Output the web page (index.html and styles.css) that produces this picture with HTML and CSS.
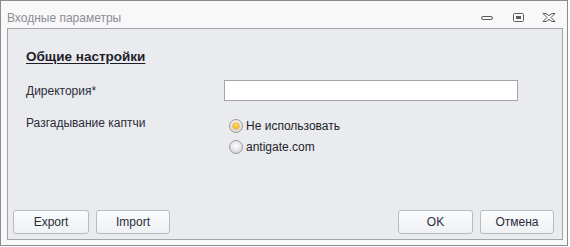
FILE: index.html
```html
<!DOCTYPE html>
<html lang="ru">
<head>
<meta charset="utf-8">
<title>Входные параметры</title>
<link rel="stylesheet" href="styles.css">
</head>
<body>
<div class="window">
  <div class="titlebar">
    <span class="title">Входные параметры</span>
    <div class="controls">
      <svg class="ctl" width="14" height="12" viewBox="0 0 14 12"><rect x="1.5" y="4.5" width="11" height="3" rx="1.5" fill="none" stroke="#5c5c5c"/></svg>
      <svg class="ctl" width="14" height="12" viewBox="0 0 14 12"><rect x="2.5" y="1.5" width="10" height="8" rx="1" fill="none" stroke="#5c5c5c"/><rect x="5" y="4" width="5" height="3" fill="#5c5c5c"/></svg>
      <svg class="ctl" width="14" height="12" viewBox="0 0 14 12"><polygon points="1,1.5 4,1.5 7,3.6 10,1.5 13,1.5 9,5.5 13,9.5 10,9.5 7,7.4 4,9.5 1,9.5 5,5.5" fill="none" stroke="#5c5c5c" stroke-linejoin="round"/></svg>
    </div>
  </div>
  <div class="panel">
    <div class="content">
      <h2 class="heading">Общие настройки</h2>
      <div class="form">
        <label class="label label-mid">Директория*</label>
        <input class="text-input" type="text">
        <label class="label label-top">Разгадывание каптчи</label>
        <div class="radios">
          <div class="radio-row"><span class="radio checked"></span><span class="radio-text">Не использовать</span></div>
          <div class="radio-row"><span class="radio"></span><span class="radio-text">antigate.com</span></div>
        </div>
      </div>
    </div>
    <div class="footer">
      <div class="group">
        <button class="btn btn-export">Export</button>
        <button class="btn btn-import">Import</button>
      </div>
      <div class="group">
        <button class="btn btn-ok">OK</button>
        <button class="btn btn-cancel">Отмена</button>
      </div>
    </div>
  </div>
</div>
</body>
</html>
```
FILE: styles.css
```css
html, body {
  margin: 0;
  padding: 0;
  background: #ffffff;
}
body {
  font-family: "Liberation Sans", Arial, sans-serif;
  font-size: 12px;
  color: #2c2c3a;
}
.window {
  width: 566px;
  height: 244px;
  border: 1px solid #8c8c8c;
  background: #f8f8f8;
  display: flex;
  flex-direction: column;
}
.titlebar {
  height: 27px;
  display: flex;
  align-items: center;
  justify-content: space-between;
  padding-left: 6px;
  padding-right: 11px;
  flex: none;
}
.title {
  color: #8c8c96;
  font-size: 12px;
  margin-top: 6px;
}
.controls {
  display: flex;
  gap: 17px;
  margin-top: 6px;
}
.ctl {
  display: block;
}
.panel {
  margin: 0 4px 5px 6px;
  flex: 1;
  border: 1px solid #a3a5ab;
  background: #e9ebef;
  display: flex;
  flex-direction: column;
}
.content {
  flex: 1;
  padding: 20px 0 0 18px;
}
.heading {
  margin: 0;
  font-size: 13.5px;
  line-height: 16px;
  font-weight: bold;
  color: #1e1e28;
  text-decoration: underline;
  text-underline-offset: 2px;
}
.form {
  margin-top: 15px;
  display: grid;
  grid-template-columns: 198px 294px;
  row-gap: 14px;
}
.label {
  color: #2c2c3a;
}
.label-mid {
  align-self: center;
}
.label-top {
  line-height: 16px;
}
.text-input {
  box-sizing: border-box;
  width: 294px;
  height: 21px;
  border: 1px solid #a3a5ab;
  background: #ffffff;
  margin: 0;
  padding: 0 3px;
  font: inherit;
}
.radios {
  display: flex;
  flex-direction: column;
  padding-left: 5px;
}
.radio-row {
  height: 21px;
  display: flex;
  align-items: center;
  gap: 3px;
}
.radio {
  box-sizing: border-box;
  width: 14px;
  height: 14px;
  border-radius: 50%;
  border: 1px solid #9a9aa2;
  background: radial-gradient(circle at 50% 40%, #fdfdfd 0%, #e6e6e8 50%, #c6c7cb 100%);
  position: relative;
  flex: none;
}
.radio.checked {
  border-color: #a59d8a;
}
.radio.checked::after {
  content: "";
  position: absolute;
  left: 3px;
  top: 3px;
  width: 6px;
  height: 6px;
  border-radius: 50%;
  background: radial-gradient(circle at 50% 35%, #ffe26a 0%, #f7b21c 70%, #e89a0c 100%);
  box-shadow: 0 0 0 0.5px #d9941a;
}
.radio-text {
  color: #1e1e28;
}
.footer {
  display: flex;
  justify-content: space-between;
  padding: 0 8px 5px 5px;
}
.group {
  display: flex;
  gap: 7px;
}
.btn {
  box-sizing: border-box;
  height: 24px;
  border: 1px solid #b8bbc1;
  border-radius: 3px;
  background: linear-gradient(#fafbfc, #eef0f3);
  font: inherit;
  color: #2c2c3a;
  padding: 0;
  margin: 0;
}
.btn-export { width: 76px; }
.btn-import { width: 74px; }
.btn-ok { width: 75px; }
.btn-cancel { width: 74px; }
```
